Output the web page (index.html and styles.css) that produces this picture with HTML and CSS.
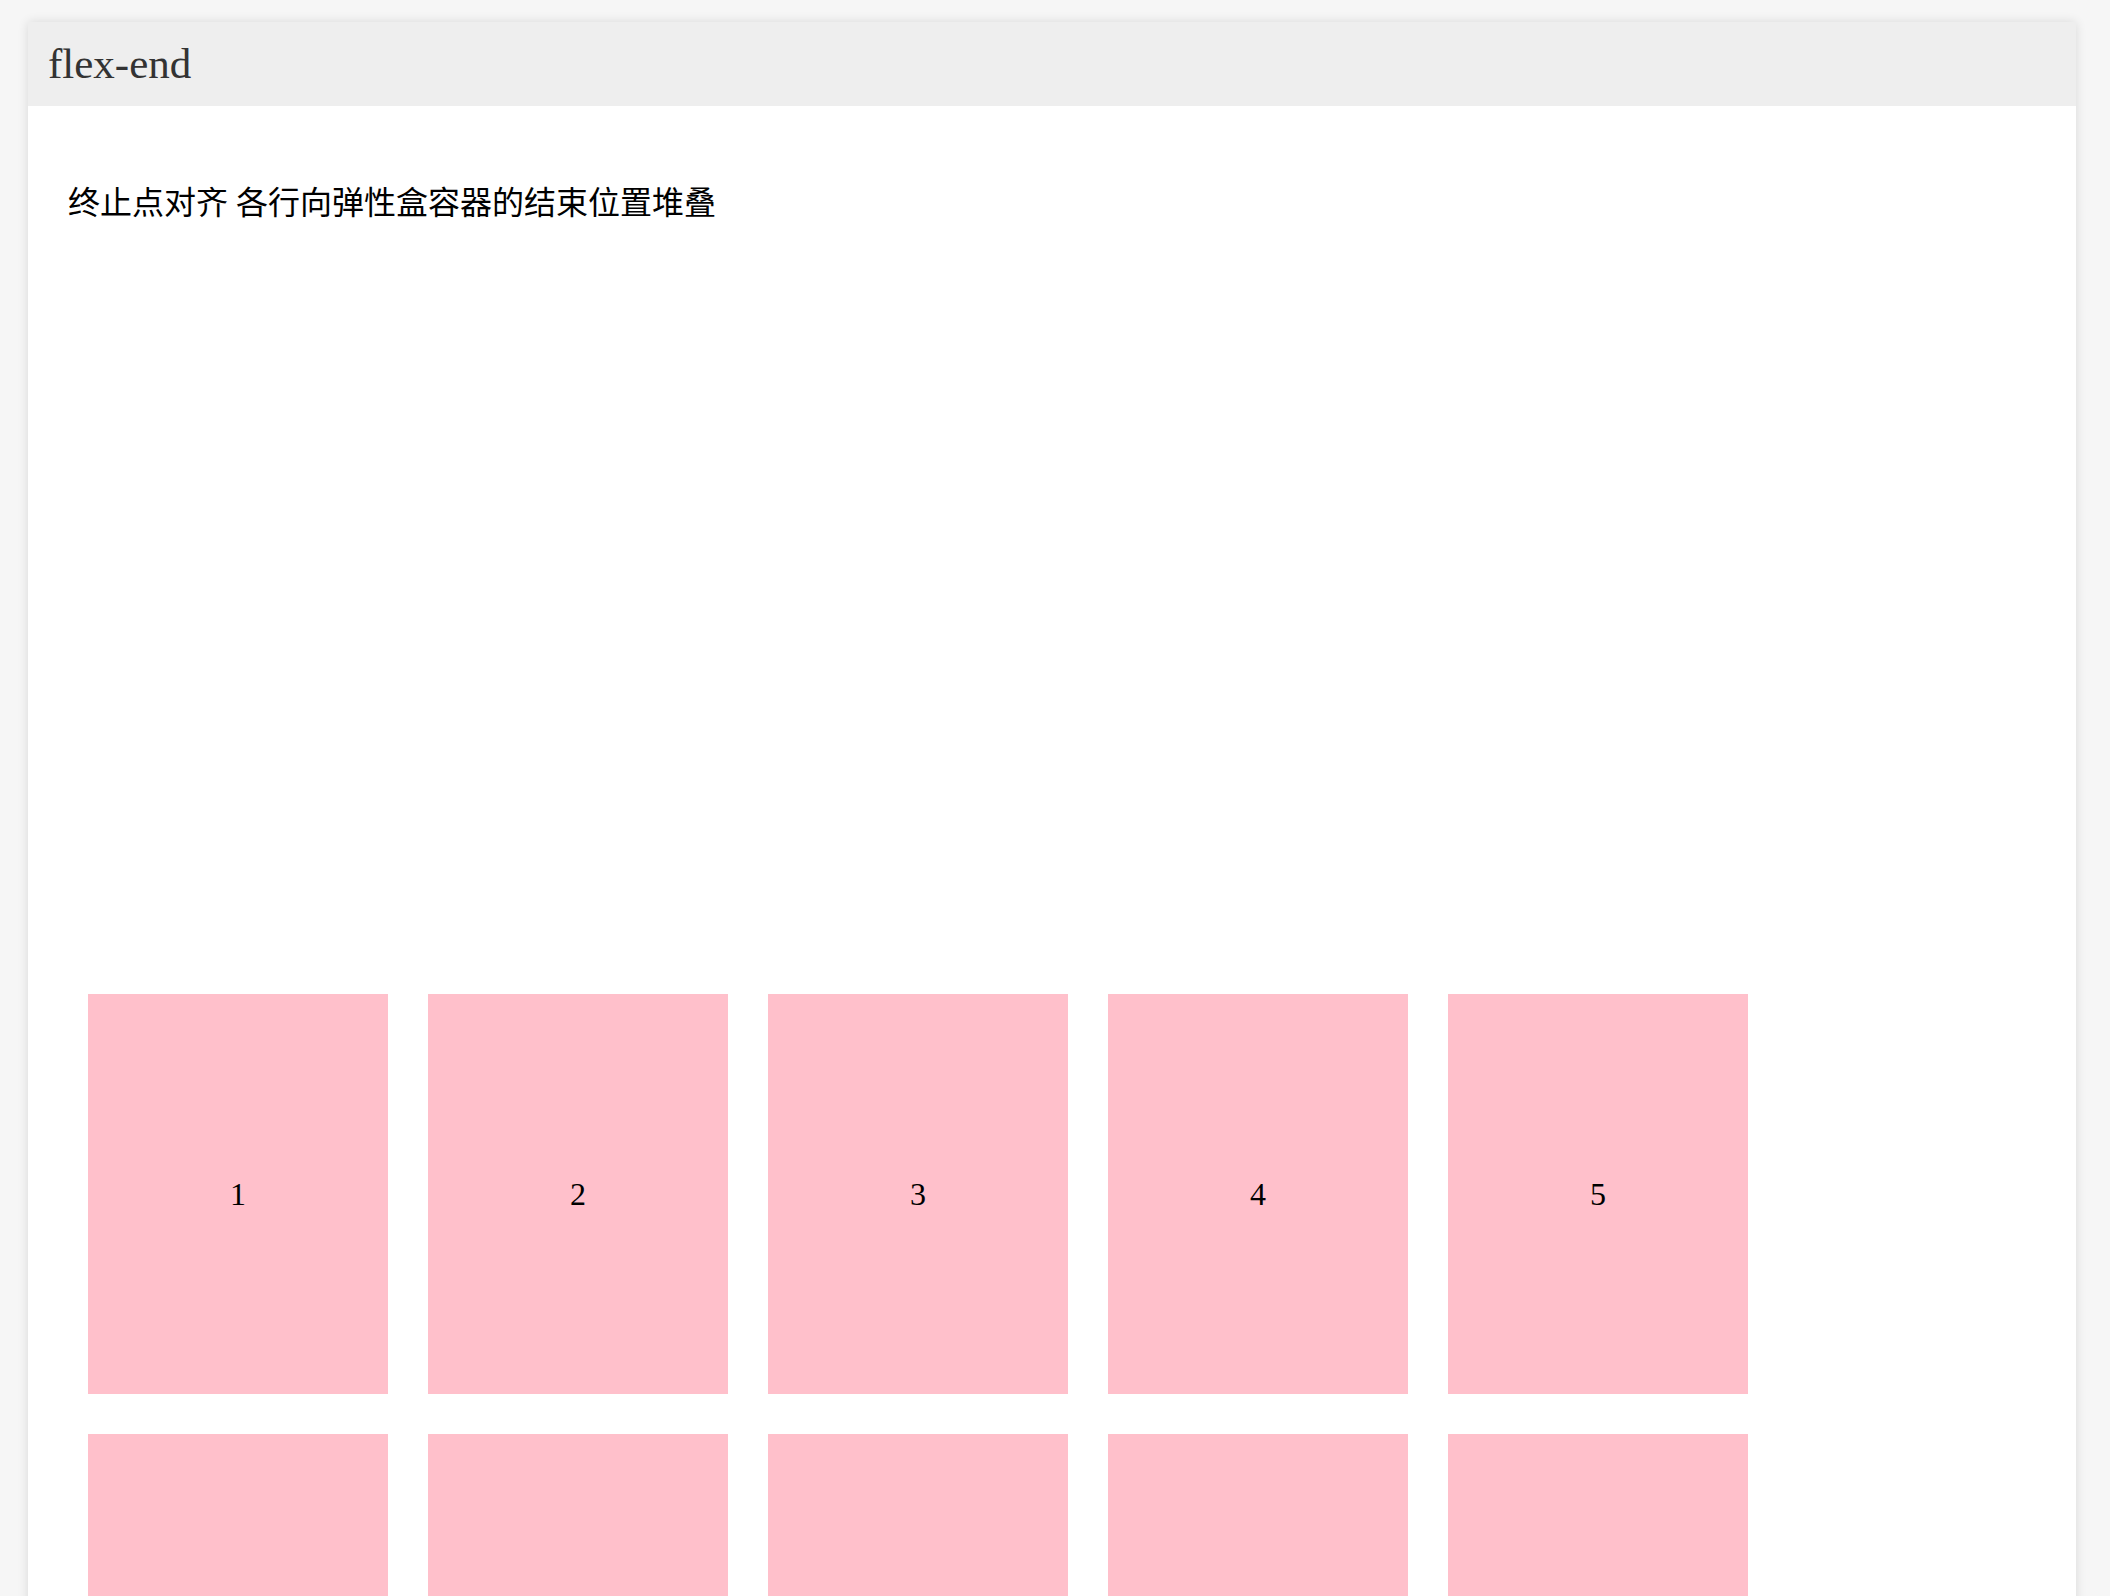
FILE: index.html
```html
<!DOCTYPE html>
<html lang="zh">
<head>
<meta charset="utf-8">
<title>flex-end</title>
<link rel="stylesheet" href="styles.css">
</head>
<body>
<div class="card">
  <div class="card-header">flex-end</div>
  <div class="card-body">
    <p class="desc">终止点对齐 各行向弹性盒容器的结束位置堆叠</p>
    <div class="flex-box">
      <div class="item">1</div>
      <div class="item">2</div>
      <div class="item">3</div>
      <div class="item">4</div>
      <div class="item">5</div>
      <div class="item">6</div>
      <div class="item">7</div>
      <div class="item">8</div>
      <div class="item">9</div>
      <div class="item">10</div>
    </div>
  </div>
</div>
</body>
</html>
```

FILE: styles.css
```css
html, body {
  margin: 0;
  padding: 0;
}
body {
  background: #f6f6f6;
  padding: 22px 34px 0 28px;
  font-family: "Liberation Serif", "Noto Sans CJK SC", serif;
  color: #000;
}
.card {
  background: #fff;
  box-shadow: 0 0 10px rgba(0, 0, 0, 0.12);
}
.card-header {
  background: #eeeeee;
  height: 84px;
  line-height: 84px;
  padding-left: 20px;
  font-size: 43px;
  color: #333;
}
.card-body {
  padding: 0 40px;
}
.desc {
  margin: 0;
  padding-top: 77px;
  line-height: 40px;
  font-size: 32px;
}
.flex-box {
  display: flex;
  flex-wrap: wrap;
  align-content: flex-end;
  height: 1631px;
}
.item {
  width: 300px;
  height: 400px;
  margin: 20px;
  background: pink;
  display: flex;
  align-items: center;
  justify-content: center;
  font-size: 32px;
}
```
